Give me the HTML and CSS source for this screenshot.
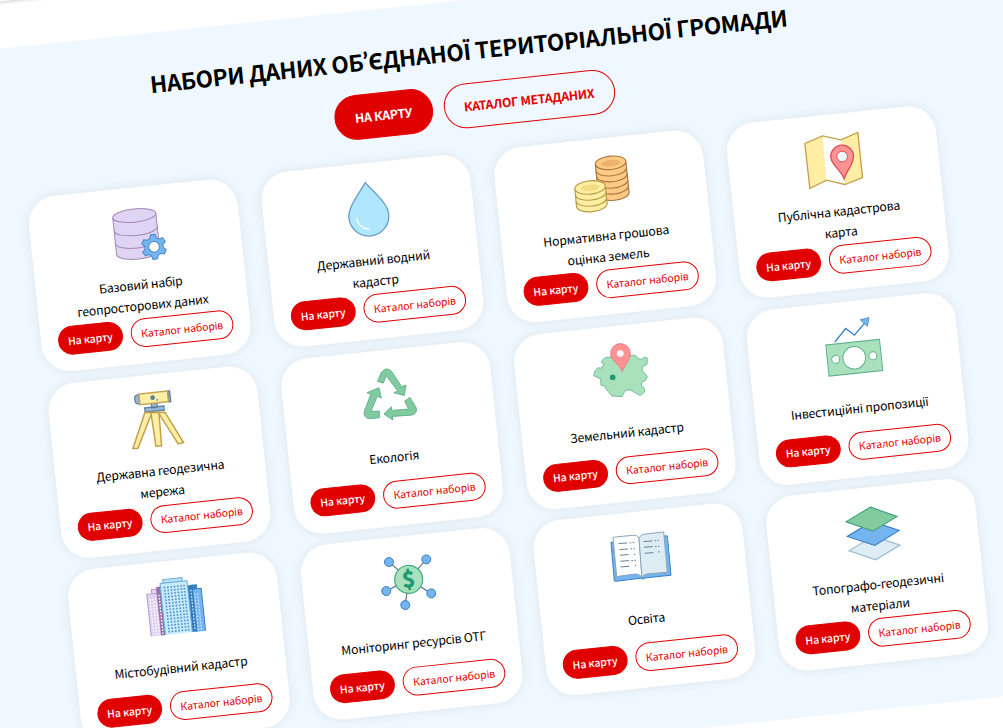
FILE: index.html
```
<!DOCTYPE html>
<html lang="uk">
<head>
<meta charset="utf-8">
<title>Набори даних</title>
<link rel="stylesheet" href="styles.css">
</head>
<body>
<div class="viewport">
<div class="stage">
<header class="topbar"></header>
<section class="band">
<h1 class="title">НАБОРИ ДАНИХ ОБ<span class="apos">’</span>ЄДНАНОЇ ТЕРИТОРІАЛЬНОЇ ГРОМАДИ</h1>
<div class="actions">
<a class="btn btn-lg btn-fill w-map">НА КАРТУ</a>
<a class="btn btn-lg btn-line w-meta">КАТАЛОГ МЕТАДАНИХ</a>
</div>
<div class="grid">

<article class="card">
<svg class="icon" viewBox="-90 -90 180 180">
<g fill="#e0d4f4" stroke="#a487b5" stroke-width="3"><path d="M-62.500-54V57A65 20 0 0 0 67.500 57V-54"/><ellipse cx="2.500" cy="-54" rx="65" ry="20"/><path fill="none" d="M-62.500-14A65 20 0 0 0 67.500-14M-62.500 24A65 20 0 0 0 67.500 24"/></g>
<g transform="translate(51.500 45.500)" stroke="#4788c7" stroke-width="3"><polygon fill="#74b5f0" points="-10,-26 -7,-37 7,-37 10,-26 17.500,-21.700 28.500,-24.600 35.500,-12.400 27.500,-4.300 27.500,4.300 35.500,12.400 28.500,24.600 17.500,21.700 10,26 7,37 -7,37 -10,26 -17.500,21.700 -28.500,24.600 -35.500,12.400 -27.500,4.300 -27.500,-4.300 -35.500,-12.400 -28.500,-24.600 -17.500,-21.700"/><circle r="16" fill="#fff"/></g>
</svg>
<h2 class="name">Базовий набір<br>геопросторових даних</h2>
<div class="row"><a class="btn btn-fill">На карту</a><a class="btn btn-line">Каталог наборів</a></div>
</article>

<article class="card">
<svg class="icon" viewBox="-90 -90 180 180">
<path d="M0-80C12-60 60-15 60 21A60 60 0 0 1-60 21C-60-15-12-60 0-80Z" fill="#b0e7ff" stroke="#689cca" stroke-width="4"/>
<path d="M-37 23A37 38 0 0 0 0 60" fill="none" stroke="#fff" stroke-width="4"/>
</svg>
<h2 class="name">Державний водний<br>кадастр</h2>
<div class="row"><a class="btn btn-fill">На карту</a><a class="btn btn-line">Каталог наборів</a></div>
</article>

<article class="card">
<svg class="icon" viewBox="-90 -90 180 180">
<g fill="#ffcb84" stroke="#aa7740" stroke-width="3.500"><path d="M-10-62V31A46 20 0 0 0 82 31V-62"/><path fill="none" d="M-10-43A46 20 0 0 0 82-43M-10-25A46 20 0 0 0 82-25M-10-6A46 20 0 0 0 82-6M-10 12A46 20 0 0 0 82 12"/><ellipse cx="36" cy="-62" rx="46" ry="20"/></g>
<ellipse cx="36" cy="-61" rx="29" ry="10" fill="#ebb36e"/>
<g fill="#ffeea3" stroke="#ba9b48" stroke-width="3.500"><path d="M-79 5V58A46 20 0 0 0 13 58V5"/><path fill="none" d="M-79 23A46 20 0 0 0 13 23M-79 41A46 20 0 0 0 13 41"/><ellipse cx="-33" cy="5" rx="46" ry="20"/></g>
<ellipse cx="-33" cy="6" rx="28" ry="10" fill="#f5db85"/>
</svg>
<h2 class="name">Нормативна грошова<br>оцінка земель</h2>
<div class="row"><a class="btn btn-fill">На карту</a><a class="btn btn-line">Каталог наборів</a></div>
</article>

<article class="card">
<svg class="icon" viewBox="-90 -90 180 180"><g transform="rotate(6)">
<path fill="#ffeea3" d="M-86-50-33-73-21 60-71 85ZM22-61 73-83 87 52 34 73Z"/>
<path fill="none" stroke="#c3a04a" stroke-width="4" d="M-86-50-33-73 22-61 73-83 87 52 34 73-21 60-71 85Z"/>
<path d="M32 56C22 30-8 12-8-9A34 34 0 0 1 60-13C61 12 40 28 32 56Z" fill="#ff9293" stroke="#df4c54" stroke-width="4"/>
<circle cx="26" cy="-11" r="16" fill="#f0f8ff" stroke="#df4c54" stroke-width="3"/>
</g></svg>
<h2 class="name">Публічна кадастрова<br>карта</h2>
<div class="row"><a class="btn btn-fill">На карту</a><a class="btn btn-line">Каталог наборів</a></div>
</article>

<article class="card">
<svg class="icon" viewBox="-90 -90 180 180">
<g fill="#98b6d0" stroke="#567d9f" stroke-width="3.500"><path d="M-40-79H-47Q-54-77-54-66Q-54-54-47-52H-40Z"/><path d="M47-81H53V-48H47Z"/><path d="M-6-50H11V-36H-6ZM-27-38H31V-25H-27Z"/></g>
<rect x="-40" y="-81" width="86" height="32" fill="#ffeea3" stroke="#c3a04a" stroke-width="4"/>
<circle cx="0" cy="-66" r="7" fill="#567d9f"/><circle cx="13" cy="-58" r="2.500" fill="#567d9f"/>
<g transform="rotate(6)" fill="#ffeea3" stroke="#c3a04a" stroke-width="4.500"><path d="M-30-21-9-21-51 86-66 87ZM10-21 30-22 86 69 70 73ZM-12-21 12-22 20 79 3 80Z"/></g>
</svg>
<h2 class="name">Державна геодезична<br>мережа</h2>
<div class="row"><a class="btn btn-fill">На карту</a><a class="btn btn-line">Каталог наборів</a></div>
</article>

<article class="card">
<svg class="icon" viewBox="-90 -90 180 180"><g transform="rotate(6)" fill="#82caa0" stroke="#5fb58c" stroke-width="3">
<path d="M-30-41-20-66Q-4-88 12-71L42-25 55-30 50 1 19-7 30-13-4-58-13-36Z"/>
<path d="M-26-22-19 9-31 3-50 49-25 48V68L-56 71Q-73 67-70 49L-50-3-62-7Z"/>
<path d="M-11 57 11 35 12 46 63 42 51 18 67 7 86 39Q89 56 73 60L14 64 16 75Z"/>
</g></svg>
<h2 class="name">Екологія</h2>
<div class="row"><a class="btn btn-fill">На карту</a><a class="btn btn-line">Каталог наборів</a></div>
</article>

<article class="card">
<svg class="icon" viewBox="-90 -90 180 180"><g transform="rotate(6)">
<path fill="#aae1bd" stroke="#6fbd99" stroke-width="3" stroke-linejoin="round" d="M-55-30-45-39-5-43 40-46 49-43 55-35 64-34 74-41 81-37 80-19 65-11 66 0 81 18 75 30 63 36 64 45 73 56 72 65 60 75 30 58 15 59 5 78-25 76-44 54-46 47-58 43-59 25-80 15-76 1-68-8-55-8-49-20-57-25Z"/>
<path fill="#ff9293" stroke="#eb7079" stroke-width="2.500" d="M6 3C-2-18-29-31-29-50A29.500 30 0 0 1 30-52C30-31 13-18 6 3Z"/>
<circle cx="0" cy="-51" r="10" fill="#fff"/><circle cx="-23" cy="20" r="8.500" fill="#1f9b74"/>
</g></svg>
<h2 class="name">Земельний кадастр</h2>
<div class="row"><a class="btn btn-fill">На карту</a><a class="btn btn-line">Каталог наборів</a></div>
</article>

<article class="card">
<svg class="icon" viewBox="-90 -90 180 180">
<rect x="-81" y="-12" width="162" height="94" fill="#aae1bd" stroke="#5db08c" stroke-width="3"/>
<g fill="#fff" stroke="#5db08c" stroke-width="3"><circle cy="35" r="34"/><circle cx="-56" cy="34" r="12"/><circle cx="56" cy="35" r="12"/></g>
<g transform="rotate(6)" stroke="#397fc1"><path fill="none" stroke-width="4" d="M-55-12-22-53 4-33 38-73"/><path fill="#74b5f0" stroke-width="2" d="M48-86 21-79 43-59Z"/></g>
</svg>
<h2 class="name">Інвестиційні пропозиції</h2>
<div class="row"><a class="btn btn-fill">На карту</a><a class="btn btn-line">Каталог наборів</a></div>
</article>

<article class="card">
<svg class="icon" viewBox="-90 -90 180 180">
<g stroke-width="3"><path fill="#e0d4f4" stroke="#b89bc9" d="M-64-45V-58H-48V-45"/><path fill="#e0d4f4" stroke="#b89bc9" d="M-79 82V-45H-48V82"/><path fill="#9572a7" d="M-49 82V-63L-36-65V82Z"/>
<path fill="#397fc1" stroke="#397fc1" d="M58-46V-58H72V-46"/><path fill="#74b5f0" stroke="#397fc1" d="M58 82V-46H85V82"/><path fill="#337cb9" d="M45 82V-59H60V82Z"/>
<path fill="#b7dff6" stroke="#6fa8d6" d="M-27-73V-84H31V-73"/><path fill="#c5ecff" stroke="#6fa8d6" d="M-36 82V-73H45V82"/></g>
<g fill="none" stroke-dasharray="5 4.500">
<path stroke="#5593c8" stroke-width="5" d="M-24-62V78M-14-62V78M-4-62V78M6-62V78M16-62V78M26-62V78M35-62V78"/>
<path stroke="#fff" stroke-width="4" d="M-71-30V78M-62-30V78M-54-30V78M-43-40V78"/>
<path stroke="#c8e5ff" stroke-width="4" d="M54-45V78M64-32V78M73-32V78"/></g>
</svg>
<h2 class="name">Містобудівний кадастр</h2>
<div class="row"><a class="btn btn-fill">На карту</a><a class="btn btn-line">Каталог наборів</a></div>
</article>

<article class="card">
<svg class="icon" viewBox="-90 -90 180 180">
<g transform="rotate(6)"><path d="M-55-61 4-8 57-68M-63 27 4-8 72 34M4-8-6 69" fill="none" stroke="#6c8196" stroke-width="4"/>
<g fill="#74b5f0" stroke="#397fc1" stroke-width="3"><circle cx="-55" cy="-60" r="13.500"/><circle cx="57" cy="-68" r="13.500"/><circle cx="-63" cy="27" r="13.500"/><circle cx="72" cy="34" r="13.500"/><circle cx="-6" cy="69" r="13.500"/></g></g>
<circle cx="5" cy="-7.500" r="42" fill="#aae1bd" stroke="#40a980" stroke-width="3.500"/>
<text class="dollar" x="5" y="16">$</text>
</svg>
<h2 class="name">Моніторинг ресурсів ОТГ</h2>
<div class="row"><a class="btn btn-fill">На карту</a><a class="btn btn-line">Каталог наборів</a></div>
</article>

<article class="card">
<svg class="icon" viewBox="-90 -90 180 180"><g transform="rotate(6)">
<path fill="#74b5f0" stroke="#397fc1" stroke-width="3" d="M-87-46H-78L75-65H83L93 53 15 61Q10 67 2 62L-72 71-77 70Z"/>
<path fill="#fff" stroke="#8aa5b8" stroke-width="3" d="M-81-61-20-67Q-8-68-3-59L6 59Q-2 49-14 49L-70 57Z"/>
<path fill="#deecf4" stroke="#8aa5b8" stroke-width="3" d="M-3-59Q1-68 12-70L71-77 82 44 21 49Q12 50 6 59Z"/>
<path fill="none" stroke="#65819b" stroke-width="3" d="M-64-42-38-44M-62-24-36-26M-60-7-34-9M-59 11-33 9M-58 28-32 26M11-48 37-50M12-31 38-33M14-13 40-15"/>
<path fill="none" stroke="#65819b" stroke-width="3" stroke-dasharray="5 4" d="M-31-44-17-45M-29-26-16-27M-14-10-19-9M-26 9-12 8M-15 24-11 24M44-51 57-52M45-33 58-34M54-17 60-17"/>
</g></svg>
<h2 class="name">Освіта</h2>
<div class="row"><a class="btn btn-fill">На карту</a><a class="btn btn-line">Каталог наборів</a></div>
</article>

<article class="card">
<svg class="icon" viewBox="-90 -90 180 180"><g transform="rotate(6)" stroke-width="3.500">
<path fill="#deecf4" stroke="#9dbbd3" d="M2 9 82 36 9 80-71 53Z"/>
<path fill="#74b5f0" stroke="#397fc1" d="M-2-35 79-8 6 37-76 10Z"/>
<path fill="#82caa0" stroke="#42a47c" d="M-7-78 73-50 1-6-80-34Z"/>
</g></svg>
<h2 class="name">Топографо-геодезичні<br>матеріали</h2>
<div class="row"><a class="btn btn-fill">На карту</a><a class="btn btn-line">Каталог наборів</a></div>
</article>

</div>
</section>
</div>
</div>
</body>
</html>
```
FILE: styles.css
```
* { box-sizing: border-box; }
body {
  margin: 0;
  background: #fff;
  color: #000;
  font-family: "Source Sans Pro", "Noto Sans CJK SC", "Noto Sans", sans-serif;
}
.viewport { display: flow-root; width: 1003px; height: 728px; overflow: hidden; }
.stage {
  width: 1203px;
  height: 1028px;
  margin: -150px 0 0 -100px;
  transform: rotate(-6deg);
}
.topbar { height: 101px; background: #fff; box-shadow: 0 0 4px rgba(0, 0, 0, .3); }
.band {
  height: 749px;
  margin-top: 47px;
  padding: 33px 145px 0;
  background: #f0f8ff;
}
.title {
  margin: 0;
  font-size: 22.600px;
  letter-spacing: -.34px;
  line-height: 36px;
  font-weight: 700;
  text-align: center;
  white-space: nowrap;
}
.apos { font-family: Lato, sans-serif; font-size: 25px; line-height: 1; }
.actions { display: flex; justify-content: center; gap: 10.500px; margin-top: 14px; }
.btn {
  display: flex;
  align-items: center;
  justify-content: center;
  height: 28.700px;
  border: 1px solid #e10000;
  border-radius: 23px;
  font-size: 10.450px;
  letter-spacing: -.07px;
  white-space: nowrap;
}
.btn-fill { width: 65px; background: #e10000; color: #fff; font-weight: 500; }
.btn-line { width: 103.500px; color: #e10000; }
.btn-lg { height: 45px; font-size: 12.200px; letter-spacing: -.23px; font-weight: 700; }
.w-map { width: 99.500px; }
.w-meta { width: 172px; }
.grid {
  display: grid;
  grid-template-columns: repeat(4, 210px);
  grid-auto-rows: 176px;
  gap: 11.400px 24px;
  justify-content: center;
  margin-top: 24.200px;
  padding-left: 1px;
}
.card {
  display: flex;
  flex-direction: column;
  align-items: center;
  padding-top: 15.600px;
  border-radius: 28px;
  background: #fff;
  box-shadow: 0 0 11px rgba(0, 0, 0, .08);
}
.icon { width: 60px; height: 60px; }
.name {
  display: flex;
  align-items: center;
  height: 42px;
  margin: 11px 0 2.400px;
  font-size: 12.200px;
  letter-spacing: -.16px;
  line-height: 21px;
  font-weight: 400;
  text-align: center;
  white-space: nowrap;
}
.row { display: flex; gap: 8px; }
.dollar { font-size: 66px; font-weight: 900; fill: #1f9b74; text-anchor: middle; }
```
